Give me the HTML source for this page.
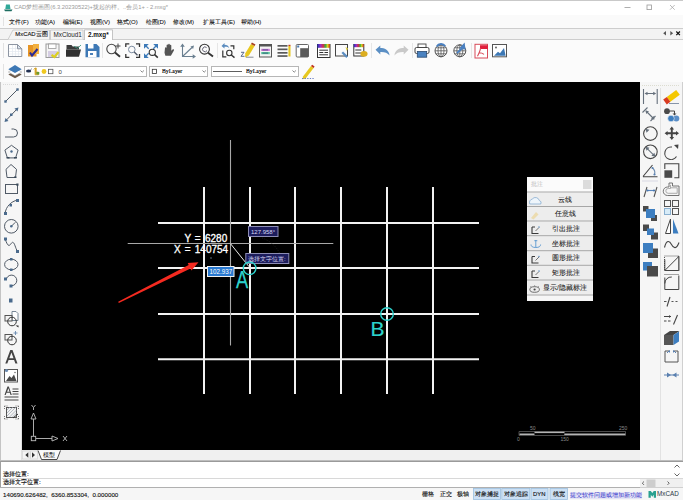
<!DOCTYPE html>
<html><head><meta charset="utf-8">
<style>
*{box-sizing:border-box;margin:0;padding:0}
html,body{width:683px;height:500px;overflow:hidden;background:#f7f7f7;font-family:"Liberation Sans",sans-serif;color:#222;position:relative}
.a{position:absolute}
.t{position:absolute;white-space:nowrap;line-height:1;z-index:2}
svg.ov{z-index:1;position:absolute;left:0;top:0;width:683px;height:500px}
#title{left:0;top:0;width:683px;height:15px;background:#fff;border-top:1px solid #c9c9c9}
#menu{left:0;top:15px;width:683px;height:13px;background:#fafafa}
#tabs{left:0;top:28px;width:683px;height:12px;background:#f3f3f3;border-top:1px solid #cdcdcd;border-bottom:1px solid #cdcdcd}
#tb{left:0;top:40px;width:683px;height:42px;background:#fbfbfb}
#canvas{left:22px;top:82px;width:618px;height:368px;background:#000}
#ltb{left:0;top:82px;width:22px;height:379px;background:#f6f6f6;border-left:1px solid #c4c4c4}
#rtb{left:640px;top:82px;width:43px;height:379px;background:#f6f6f6}
#mtab{left:22px;top:450px;width:618px;height:11px;background:#f0f0f0}
#cmd{left:0;top:460.5px;width:683px;height:27.5px;background:#fff;border-top:1.5px solid #9a9a9a;border-left:1.5px solid #a0a0a0}
#status{left:0;top:488px;width:683px;height:12px;background:#f6f6f6}
.m{font-size:6px;color:#000;-webkit-text-stroke:.06px #000}
.dd{position:absolute;background:#fff;border:1px solid #b6b6b6}
</style></head><body>
<div id="title" class="a"></div>
<div class="t" style="left:14px;top:4.5px;font-size:5.8px;color:#9a9a9a">CAD梦想画图(6.3.20230522)+拢起的样。..会员1+ - 2.mxg*</div>
<div id="menu" class="a"></div>
<div class="t m" style="left:9px;top:19px">文件(F)</div>
<div class="t m" style="left:35px;top:19px">功能(A)</div>
<div class="t m" style="left:62.5px;top:19px">编辑(E)</div>
<div class="t m" style="left:90px;top:19px">视图(V)</div>
<div class="t m" style="left:117px;top:19px">格式(O)</div>
<div class="t m" style="left:145.5px;top:19px">绘图(D)</div>
<div class="t m" style="left:173px;top:19px">修改(M)</div>
<div class="t m" style="left:203px;top:19px">扩展工具(E)</div>
<div class="t m" style="left:241px;top:19px">帮助(H)</div>
<div id="tabs" class="a"></div>
<div id="tb" class="a"></div>
<div id="ltb" class="a"></div>
<div id="rtb" class="a"></div>
<div id="canvas" class="a"></div>
<div id="mtab" class="a"></div>
<div id="cmd" class="a"></div>
<div id="status" class="a"></div>
<!--DROPDOWNS-->
<div class="dd" style="left:24px;top:66px;width:123px;height:11px"></div>
<div class="dd" style="left:149px;top:66px;width:59px;height:11px"></div>
<div class="dd" style="left:211px;top:66px;width:88px;height:11px"></div>
<div class="t" style="left:15.3px;top:32.3px;font-size:5.9px;color:#111;-webkit-text-stroke:.12px #111">MxCAD云图</div>
<div class="t" style="left:53.5px;top:32.3px;font-size:6.3px;color:#222">MxCloud1</div>
<div class="t" style="left:88px;top:32.3px;font-size:6.3px;color:#111;font-weight:bold">2.mxg*</div>
<div class="t" style="left:58.5px;top:68.5px;font-size:6px;color:#444">0</div>
<div class="t" style="left:162px;top:68.5px;font-size:5.8px;color:#000;-webkit-text-stroke:.12px #000;font-family:'Liberation Serif',serif">ByLayer</div>
<div class="t" style="left:246px;top:68.5px;font-size:5.8px;color:#000;-webkit-text-stroke:.12px #000;font-family:'Liberation Serif',serif">ByLayer</div>
<div class="t" style="left:184.5px;top:233.5px;font-size:10px;color:#fff;-webkit-text-stroke:.3px #fff">Y</div>
<div class="t" style="left:194.8px;top:233.5px;font-size:10px;color:#fff;-webkit-text-stroke:.3px #fff">=</div>
<div class="t" style="left:205px;top:233.5px;font-size:10px;color:#fff;-webkit-text-stroke:.3px #fff">6280</div>
<div class="t" style="left:174px;top:244.5px;font-size:10px;color:#fff;-webkit-text-stroke:.3px #fff">X</div>
<div class="t" style="left:184.8px;top:244.5px;font-size:10px;color:#fff;-webkit-text-stroke:.3px #fff">=</div>
<div class="t" style="left:194.8px;top:244.5px;font-size:10px;color:#fff;-webkit-text-stroke:.3px #fff">140754</div>
<div class="t" style="left:235.8px;top:269px;font-size:23px;color:#2cd2cc;-webkit-text-stroke:.25px #2cd2cc;transform:scaleX(.8);transform-origin:0 0">A</div>
<div class="t" style="left:370.5px;top:318px;font-size:21px;color:#2cd2cc;-webkit-text-stroke:.2px #2cd2cc;transform-origin:0 0">B</div>
<div class="t" style="left:251px;top:228.5px;font-size:6px;color:#d8d8f4">127.958°</div>
<div class="t" style="left:248px;top:255.5px;font-size:6px;color:#d8d8f4">选择文字位置:</div>
<div class="t" style="left:209.5px;top:268.5px;font-size:6.3px;color:#fff">102.937</div>
<div class="t" style="left:530px;top:426px;font-size:5px;color:#8a8a8a">50</div>
<div class="t" style="left:619px;top:426px;font-size:5px;color:#8a8a8a">250</div>
<div class="t" style="left:517px;top:437px;font-size:5px;color:#8a8a8a">0</div>
<div class="t" style="left:560.5px;top:437px;font-size:5px;color:#8a8a8a">150</div>
<div class="t" style="left:31px;top:404px;font-size:5.5px;color:#c8c8c8;display:none">Y</div>
<div class="t" style="left:43px;top:452px;font-size:6px;color:#000">模型</div>
<div class="t" style="left:531px;top:182px;font-size:5.8px;color:#b8b8b8">批注</div>
<div class="t" style="left:557.5px;top:196.5px;font-size:6.5px;color:#111;-webkit-text-stroke:.05px #111">云线</div>
<div class="t" style="left:554.5px;top:211px;font-size:6.5px;color:#111;-webkit-text-stroke:.05px #111">任意线</div>
<div class="t" style="left:551.5px;top:225.5px;font-size:6.5px;color:#111;-webkit-text-stroke:.05px #111">引出批注</div>
<div class="t" style="left:551.5px;top:240.5px;font-size:6.5px;color:#111;-webkit-text-stroke:.05px #111">坐标批注</div>
<div class="t" style="left:551.5px;top:255px;font-size:6.5px;color:#111;-webkit-text-stroke:.05px #111">圆形批注</div>
<div class="t" style="left:551.5px;top:269.5px;font-size:6.5px;color:#111;-webkit-text-stroke:.05px #111">矩形批注</div>
<div class="t" style="left:543px;top:284.5px;font-size:6.5px;color:#111;-webkit-text-stroke:.05px #111">显示/隐藏标注</div>
<div class="t" style="left:3px;top:470.8px;font-size:6.25px;color:#111;-webkit-text-stroke:.15px #111">选择位置:</div>
<div class="t" style="left:3px;top:479.2px;font-size:6.25px;color:#111;-webkit-text-stroke:.15px #111">选择文字位置:</div>
<div class="t" style="left:3px;top:491.5px;font-size:6.2px;color:#111;-webkit-text-stroke:.12px #111">140690.626482,&nbsp; 6360.853304,&nbsp; 0.000000</div>
<div class="t" style="left:422px;top:491.5px;font-size:5.9px;color:#111;-webkit-text-stroke:.12px #111">栅格</div>
<div class="t" style="left:439.5px;top:491.5px;font-size:5.9px;color:#111;-webkit-text-stroke:.12px #111">正交</div>
<div class="t" style="left:457px;top:491.5px;font-size:5.9px;color:#111;-webkit-text-stroke:.12px #111">极轴</div>
<div class="t" style="left:475px;top:491.5px;font-size:5.9px;color:#111;-webkit-text-stroke:.12px #111">对象捕捉</div>
<div class="t" style="left:503.5px;top:491.5px;font-size:5.9px;color:#111;-webkit-text-stroke:.12px #111">对象追踪</div>
<div class="t" style="left:533px;top:491.5px;font-size:5.9px;color:#111;-webkit-text-stroke:.12px #111">DYN</div>
<div class="t" style="left:552.5px;top:491.5px;font-size:5.9px;color:#111;-webkit-text-stroke:.12px #111">线宽</div>
<div class="t" style="left:569.5px;top:491.5px;font-size:5.75px;color:#3030c8;background:#e4e4f6;padding:1px 0">提交软件问题或增加新功能</div>
<div class="t" style="left:657px;top:491px;font-size:6.3px;color:#2a3844">MxCAD</div>
<!--SVG-->
<svg class="ov" viewBox="0 0 683 500">
<defs>
<linearGradient id="rb" x1="0" x2="1" y1="0" y2="0">
<stop offset="0" stop-color="#2030c0"/><stop offset=".25" stop-color="#a030c0"/><stop offset=".45" stop-color="#d03040"/><stop offset=".65" stop-color="#40b040"/><stop offset=".8" stop-color="#e0d020"/><stop offset="1" stop-color="#c03020"/>
</linearGradient>
</defs>
<!--grips-->
<path d="M3.5 17v9M3.5 43v15M3.5 64v15" stroke="#e2e2e2" stroke-width="1"/>
<!--1 new doc-->
<path d="M8.5 44.5h9l4.3 4.3v7.7h-13.3z" fill="#fff" stroke="#8d95a2"/>
<path d="M9 48.5h8M9 51.5h12.3M9 54h12.3M12.5 45v11M15.5 45v11M18.5 49v7" stroke="#e2e8ef" stroke-width=".7"/>
<path d="M17.5 44.5v4.3h4.3z" fill="#dde5ef" stroke="#8d95a2"/>
<!--2 orange-->
<rect x="28" y="45" width="8.5" height="11.5" fill="#e69526"/>
<rect x="33" y="44" width="6" height="10" fill="#f2b040"/>
<path d="M30 52.5l2 3 5.5-6.5" stroke="#2b2b95" stroke-width="2" fill="none"/>
<!--3 grey floppy-->
<rect x="46" y="44" width="13" height="13.5" fill="#f5f5f5" stroke="#9a9a9a"/>
<rect x="48.5" y="44" width="7.5" height="4.5" fill="#fff" stroke="#9a9a9a" stroke-width=".8"/>
<rect x="48" y="51" width="9" height="6" fill="#d5cde3"/>
<path d="M51.5 55l3 2 4-5" stroke="#ddd020" stroke-width="2.2" fill="none"/>
<!--4 dark folder-->
<path d="M66.5 45h5l1.2 1.5h6.3v3h-12.5z" fill="#3a3a3a"/>
<path d="M66 49.5h15l-2 7.2h-13z" fill="#303030"/>
<path d="M74 46.3l3.5 2 3.5-3.3" stroke="#3a9a80" stroke-width=".9" fill="none"/>
<!--5 blue floppy-->
<path d="M85.5 44h11l3 3v10.2h-14z" fill="#3d78b5"/>
<rect x="88" y="44" width="5.5" height="4.5" fill="#fff"/>
<rect x="88" y="51" width="8.5" height="6.2" fill="#fff"/>
<rect x="90" y="53" width="3" height="2" fill="#4a80b8"/>
<path d="M102.5 43v15" stroke="#e6e6e6"/>
<!--6 zoom+-->
<circle cx="111.5" cy="49" r="4.7" fill="none" stroke="#454545" stroke-width="1.1"/>
<path d="M115 52.5l5 4.3" stroke="#333" stroke-width="1.9"/>
<path d="M118 43.5v5M115.5 46h5" stroke="#444" stroke-width="1"/>
<!--7 zoom window-->
<path d="M125.8 47v-3.2h3.5M136 43.8h3.5v3.2M139.5 54v3.3h-3.5M129.3 57.3h-3.5v-3.3" stroke="#333" stroke-width="1.3" fill="none"/>
<circle cx="131.8" cy="49.5" r="3.3" fill="none" stroke="#7b8ba0" stroke-width="1"/>
<path d="M134.2 52l3.3 3.3" stroke="#505868" stroke-width="1.3"/>
<!--8 zoom extents-->
<g stroke="#3d7ab8" stroke-width="1.3" fill="none"><path d="M145.5 45.5l3.2 3.2M156.5 45.5l-3.2 3.2M145.5 56.5l3.2-3.2"/></g>
<g fill="#3d7ab8"><path d="M144 44h4.8l-4.8 4.8zM158 44h-4.8l4.8 4.8zM144 58v-4.8l4.8 4.8z"/></g>
<circle cx="152.3" cy="52.3" r="3.1" fill="none" stroke="#333" stroke-width="1.1"/>
<path d="M154.6 54.6l3.2 3" stroke="#333" stroke-width="1.5"/>
<!--9 hand-->
<path d="M165 48c0-1 1.6-1 1.6 0v-2.8c0-1 1.6-1 1.6 0v-.7c0-1 1.6-1 1.6 0v1c0-1 1.5-1 1.5 0v5.3l1.3-1.3c.8-.8 1.9 0 1.3.9l-3 5.3h-5.5l-.9-3z" fill="#555"/>
<!--10 ucs-->
<g stroke="#6a7f90" stroke-width="1.1" fill="none"><path d="M182.5 46v10.5h11M182.5 56.5l9.5-9"/></g>
<g fill="#6a7f90"><path d="M182.5 43.5l-2.3 3.3h4.6zM196 56.5l-3.3-2.3v4.6zM194 45.5l-3.6.9 2.7 2.7z"/></g>
<!--11 zoom realtime-->
<circle cx="204.5" cy="49.2" r="4.9" fill="none" stroke="#333" stroke-width="1.1"/>
<path d="M208 52.8l5 3.8" stroke="#333" stroke-width="1.9"/>
<path d="M206.6 47.6a2.4 2.4 0 1 0 .4 3" fill="none" stroke="#556" stroke-width=".9"/>
<path d="M217.5 43v15" stroke="#e6e6e6"/>
<!--12 zoom prev-->
<path d="M221.5 46l3-3v1.7c2.2 0 4.3.9 4.8 3.6c-1.1-1.4-2.7-1.7-4.8-1.6v1.7z" fill="#5b8cbf"/>
<path d="M230.5 45.8h3.3v3.5M222.8 50.5v6.3h3.5" stroke="#333" stroke-width="1.2" fill="none"/>
<circle cx="229.3" cy="53" r="2.7" fill="none" stroke="#333" stroke-width="1.1"/>
<path d="M231.3 55l3.2 2.6" stroke="#333" stroke-width="1.4"/>
<!--13 pencil z-->
<path d="M245.3 53.3L251 44l3.6 2.1-5.7 9.4-3.9 2z" fill="#e8c820"/>
<path d="M251 44l.9-1.5 3.6 2.1-.9 1.5z" fill="#a84020"/>
<path d="M241 52.3h3l-3 4h3.5" stroke="#4a5a80" stroke-width=".9" fill="none"/>
<path d="M246 57.2h7.5" stroke="#66707a" stroke-width=".8"/>
<!--14 layer box-->
<rect x="259.5" y="44.5" width="12" height="12.5" fill="#f3f3f3" stroke="#555" stroke-width="1"/>
<rect x="259.5" y="44.5" width="12" height="2" fill="#555"/>
<rect x="261.2" y="48.8" width="8.6" height="2.2" fill="#cc7ad8"/>
<rect x="261.2" y="52" width="8.6" height="2.2" fill="#5cc8a0"/>
<path d="M262.5 49.9h5.5M262.5 53.1h5.5" stroke="#263a6a" stroke-width=".7"/>
<!--15 lines pencil-->
<g fill="#5a5a5a"><rect x="277.5" y="45" width="10" height="1.7"/><rect x="277.5" y="48.5" width="10" height="1.7"/><rect x="277.5" y="52" width="10" height="1.7"/><rect x="277.5" y="55.2" width="10" height="1.7"/></g>
<rect x="288.4" y="46" width="2.1" height="10.5" fill="#e6c820"/>
<rect x="288.4" y="44.8" width="2.1" height="1.3" fill="#c04020"/>
<!--16 grey block-->
<rect x="296.2" y="44.5" width="12.3" height="12.5" rx="1" fill="#fff" stroke="#666" stroke-width="1"/>
<path d="M300.2 48.2h8.3v8.8h-8.3z" fill="#5a5a5a"/>
<rect x="297.2" y="45.5" width="2" height="2" fill="#4a7ab0"/>
<!--17 colour text style-->
<rect x="317.5" y="44.5" width="12.5" height="13" fill="#fff" stroke="#333" stroke-width="1"/>
<rect x="317.5" y="44" width="12.5" height="3.8" fill="url(#rb)"/>
<path d="M319.3 50.2h8.7M319.3 52.5h4M324.5 52.5h3.5M319.3 54.8h8.7" stroke="#333" stroke-width="1"/>
<!--18 window arrow-->
<rect x="335.5" y="44.5" width="12" height="11.5" fill="none" stroke="#444" stroke-width="1"/>
<path d="M342.3 52.3l4.8 4.8" stroke="#5a8cc0" stroke-width="2.2"/>
<path d="M345.5 47l2.5 1.5-1.2 2.5z" fill="#e0d040"/>
<!--19 colour box hand-->
<rect x="353.8" y="44.5" width="10" height="11.5" fill="#fff" stroke="#333" stroke-width="1"/>
<rect x="353.8" y="44" width="10" height="3.2" fill="url(#rb)"/>
<path d="M355.3 50h6M355.3 53h6" stroke="#333" stroke-width="1"/>
<ellipse cx="364" cy="53.8" rx="3.6" ry="2.9" fill="#dcae20"/>
<path d="M371.5 43v15" stroke="#e6e6e6"/>
<!--20 undo-->
<path d="M375.5 49.8l4.8-4.3v2.6c4.2 0 8.3 1.6 9.3 7.3c-2.1-2.6-5.2-3.6-9.3-3.4v2.6z" fill="#5b8fc4"/>
<!--21 redo-->
<path d="M408.5 49.8l-4.8-4.3v2.6c-4.2 0-8.3 1.6-9.3 7.3c2.1-2.6 5.2-3.6 9.3-3.4v2.6z" fill="#c9c9c9"/>
<path d="M412.5 43v15" stroke="#e6e6e6"/>
<!--22 printer-->
<rect x="418" y="44" width="8" height="3.8" fill="#fff" stroke="#444" stroke-width=".9"/>
<rect x="415" y="47.5" width="14" height="6" rx="1.5" fill="#fff" stroke="#444" stroke-width="1"/>
<rect x="417.3" y="51.5" width="9.4" height="5.7" fill="#4a82c0" stroke="#2a4a70" stroke-width=".8"/>
<!--23 globe-->
<circle cx="441" cy="50.8" r="6" fill="#fff" stroke="#555" stroke-width="1"/>
<path d="M435 50.8h12M435.8 47.8h10.4M435.8 53.8h10.4M441 44.8v12" stroke="#555" stroke-width=".8"/>
<ellipse cx="441" cy="50.8" rx="3" ry="6" fill="none" stroke="#555" stroke-width=".8"/>
<path d="M436.8 46.5a5 5 0 0 1 8.4-.3" stroke="#4a80c0" stroke-width="2" fill="none"/>
<!--24 globe2-->
<circle cx="459.8" cy="50.8" r="6" fill="#fff" stroke="#555" stroke-width="1"/>
<path d="M453.8 50.8h12M454.6 47.8h10.4M454.6 53.8h10.4M459.8 44.8v12" stroke="#555" stroke-width=".8"/>
<ellipse cx="459.8" cy="50.8" rx="3" ry="6" fill="none" stroke="#555" stroke-width=".8"/>
<path d="M457 53l6-5.5M464 44.5l.5 4-3.5-.8z" stroke="#4a80c0" stroke-width="1.8" fill="#4a80c0"/>
<path d="M471.5 43v15" stroke="#e6e6e6"/>
<!--25 pdf-->
<rect x="475" y="44.3" width="12.5" height="13.7" fill="#fff" stroke="#d84a58" stroke-width="1"/>
<rect x="480" y="45.2" width="8" height="3.8" fill="#e0203c"/>
<path d="M477.5 56.2c1.5-3 3-6 3-8.2M478.8 52.8c2 0 4 .5 5.2 1.6" stroke="#d84a58" stroke-width="1.1" fill="none"/>
<!--26 image-->
<rect x="492.5" y="44.5" width="14" height="12.3" fill="#fff" stroke="#555" stroke-width="1"/>
<path d="M494 55.8l4-4 2 1.5 4-5.2 1.6 7.7z" fill="#3d78b5"/>
<circle cx="496" cy="47.5" r=".9" fill="#555"/>
<!--tabs-->
<path d="M8 39.5l5-9.5h36.5v9.5" fill="#f4f4f4" stroke="#c4c4c4" stroke-width=".8"/>
<path d="M50.5 39.5v-9.5h32.5v9.5" fill="#f4f4f4" stroke="#c4c4c4" stroke-width=".8"/>
<path d="M84.5 40v-10.2h28v10.2" fill="#fff" stroke="#b8b8b8" stroke-width=".8"/>
<path d="M666 31v4.6l-2.8-2.3z" fill="#555"/><path d="M670.3 31v4.6l2.8-2.3z" fill="#555"/>
<path d="M676.3 31.5l3.6 3.6M679.9 31.5l-3.6 3.6" stroke="#111" stroke-width="1.2"/>
<path d="M624.5 7.5h6" stroke="#999" stroke-width=".8"/><rect x="647" y="5" width="4.6" height="4.6" fill="none" stroke="#999" stroke-width=".8"/><path d="M670 5l4.7 4.7M674.7 5l-4.7 4.7" stroke="#aaa" stroke-width=".8"/>
<path d="M6 4.5h3.8l.7 4.5h-5.2z" fill="#30a898"/><path d="M4 9.5h8.5l-1 1.7h-6.5z" fill="#1e6e62"/>
<!--toolbar2-->
<path d="M8.3 74.5l6.7 3.8 6.7-3.8-6.7-3.8z" fill="#6b5a4a"/>
<path d="M8.3 72l6.7 3.8 6.7-3.8-6.7-3.8z" fill="#fff" stroke="#999" stroke-width=".5"/>
<path d="M8.3 69.3l6.7 3.8 6.7-3.8-6.7-4.3z" fill="#3d78b5"/>
<ellipse cx="28.6" cy="71" rx="2.6" ry="1.6" fill="#223052"/><path d="M30.5 69.8l1.2-1" stroke="#223052" stroke-width=".8"/>
<path d="M33.5 69.5l1.5-1.5M35 68h1.3v4h2.2v2.8h-3.5z" stroke="#d8a020" stroke-width=".7" fill="#c8a830"/>
<rect x="36.5" y="72" width="2.8" height="2.5" fill="#6a9a30"/>
<circle cx="44" cy="71.5" r="2.4" fill="#f0c820"/>
<rect x="48.5" y="69.3" width="4.4" height="4.4" fill="#fff" stroke="#555" stroke-width=".8"/>
<path d="M140.5 70.5l1.7 1.7 1.7-1.7M202.5 70.5l1.7 1.7 1.7-1.7M292.5 70.5l1.7 1.7 1.7-1.7" stroke="#555" stroke-width=".7" fill="none"/>
<rect x="152.3" y="69.3" width="4.2" height="4.2" fill="#fff" stroke="#333" stroke-width=".8"/>
<path d="M213 71.5h29" stroke="#333" stroke-width=".8"/>
<path d="M303 76.5l8-10.5 2.6 2-8 10.5-3 .8z" fill="#e6c820"/>
<path d="M311 66l1.2-1.3 2.4 1.8-1 1.5z" fill="#c03020"/>
<path d="M302 78.5h12" stroke="#5a70c0" stroke-width=".9" stroke-dasharray="1.3 1.3"/>
<!--left toolbar-->
<path d="M3 84.5h16" stroke="#dadada" stroke-width="1" stroke-dasharray="1 1"/>
<path d="M21.5 82v379" stroke="#e0e0e0"/>
<g stroke="#505a66" stroke-width="1" fill="none">
<path d="M5.5 101.5l12-12"/>
<path d="M5.5 121l12-12.5"/>
<path d="M5 137h8.5a4 4 0 0 0 0-8h-2"/>
<path d="M11.5 145.3l6.6 4.8-2.5 7.8h-8.2l-2.5-7.8z"/>
<path d="M11 164.5l5.5 4.8-1 8.2h-8.5l-1-8.2z"/>
<rect x="5.5" y="184.5" width="12" height="9"/>
<path d="M5 213.5c1-7 6-12 12.5-13.5"/>
<circle cx="11.3" cy="226.3" r="6.8"/>
<path d="M11.3 226.3l4-4"/>
<path d="M5 239c1.5 3 2 6 4 6.5c2-.5 2.5-4 4.2-3c1.6 1 2 5 4.3 9"/>
<ellipse cx="11.3" cy="264.5" rx="6.7" ry="5.3"/>
<path d="M6.2 280a5.3 5.3 0 1 1 5 5.7"/>
</g>
<g fill="#4a6a8c">
<rect x="16.3" y="88.3" width="2.4" height="2.4"/><rect x="4.3" y="100.3" width="2.4" height="2.4"/>
<path d="M18.5 107.5l-4 1 3 3zM4.5 122l4-1-3-3z"/><rect x="10" y="113.5" width="2.5" height="2.5"/>
<circle cx="11.5" cy="151.5" r="1.2"/>
<rect x="4" y="212" width="3" height="3"/><rect x="9.5" y="204" width="2.5" height="2.5"/><rect x="16" y="199" width="3" height="3"/>
<circle cx="11.3" cy="226.3" r="1.2"/>
<rect x="4" y="237.5" width="3" height="3"/><rect x="16" y="250" width="3" height="3"/>
<rect x="10" y="258" width="2.5" height="2.5"/><rect x="10" y="268.5" width="2.5" height="2.5"/>
<rect x="4" y="277.5" width="3" height="3"/><rect x="9.5" y="284.5" width="3" height="3"/>
<rect x="9" y="298.5" width="3.5" height="4"/>
</g>
<g fill="#3a4a5a"><rect x="6.5" y="157" width="3" height="1.5"/><rect x="14" y="157" width="3" height="1.5"/><rect x="14" y="176.5" width="2.5" height="1.5"/><rect x="16.3" y="183.5" width="2.2" height="2.2"/></g>
<!--insert block-->
<path d="M12 311.5h4l2 2v7h-6z" fill="#fff" stroke="#6a7a8a" stroke-width=".9"/>
<rect x="5" y="315.5" width="7" height="5.5" fill="#f4f4f4" stroke="#555" stroke-width="1"/>
<circle cx="12" cy="321.5" r="4.3" fill="none" stroke="#333" stroke-width="1"/>
<path d="M15.5 325.5h3v2z" fill="#222"/>
<!--make block-->
<rect x="5" y="334.5" width="7" height="5.5" fill="#f4f4f4" stroke="#555" stroke-width="1"/>
<circle cx="12" cy="340.5" r="4.3" fill="none" stroke="#333" stroke-width="1"/>
<path d="M15.5 331v4M13.5 333h4" stroke="#6a8ab0" stroke-width=".9"/>
<!--A-->
<path d="M5.3 363.5l5-13.5h2.2l5 13.5h-2.1l-1.3-3.6h-5.5l-1.3 3.6zM9.3 358.2h4.2l-2.1-5.8z" fill="#444"/>
<!--image-->
<rect x="4.5" y="369.5" width="13" height="12.5" fill="#fff" stroke="#555" stroke-width="1"/>
<path d="M6 381l3.5-5 2 2 2.5-3.5 2.5 6.5z" fill="#4a4a4a"/>
<circle cx="6.5" cy="370.5" r="1.6" fill="#6a8ab0"/><circle cx="15" cy="372.5" r=".7" fill="#555"/>
<!--mtext-->
<path d="M4.5 395l3-8.5h1.3l3 8.5h-1.2l-.8-2.2h-3.3l-.8 2.2zM7.1 391.8h2.5l-1.25-3.6z" fill="#444"/>
<path d="M12.5 389h6M12.5 391.5h6M12.5 394h6M4.5 397h14M4.5 400h14" stroke="#444" stroke-width="1"/>
<!--hatch-->
<rect x="6.5" y="407.5" width="10" height="10" fill="#f2f2f2" stroke="#555" stroke-width="1"/>
<path d="M7 410l3-3M7 413l6-6M7 416l9-9M9.5 417l7-7M12.5 417l4-4" stroke="#9aa4b0" stroke-width=".7"/>
<path d="M4.5 406h4M4.5 406v4M18.5 406h-4M18.5 406v4M4.5 419h4M4.5 419v-4M18.5 419h-4M18.5 419v-4" stroke="#555" stroke-width=".8" stroke-dasharray="1 1"/>
<path d="M13 418l5-4" stroke="#333" stroke-width="1"/>
<!--right toolbar-->
<path d="M642 85.5h38" stroke="#dcdcd0" stroke-dasharray="1 1"/>
<path d="M660.5 88v373" stroke="#e2e2e2"/>
<path d="M682.5 82v379" stroke="#d0d0d0"/>
<g stroke="#66707c" stroke-width="1.1" fill="none">
<path d="M643.5 89v15M657.2 89v15M646 93.5h9"/>
<path d="M642.5 112.5l5-5M650.5 121l5-5M646 111l8 8"/>
<circle cx="650.4" cy="133.6" r="6.8" stroke="#444"/>
<circle cx="650.4" cy="151.8" r="6.8" stroke="#444"/>
<path d="M646.5 147.8l8 8"/>
<path d="M643 176.5l9.5-11.5M643 176.8h14.5" stroke="#444"/>
<path d="M652.5 168a6 6 0 0 1 2 6.5" stroke="#6a8ab0"/>
<path d="M644 197l3-10M654 197l3-10" stroke="#555"/><path d="M647 190.5h7.5" stroke="#5a88c0"/>
<path d="M672 147a6.3 6.3 0 1 0 4.5 9.5" stroke="#444"/>
</g>
<g fill="#66707c">
<path d="M644.5 93.5l3-1.8v3.6zM656.2 93.5l-3-1.8v3.6z"/>
<path d="M645.5 110.5l3.5.7-2.8 2.8zM654.5 119.5l-3.5-.7 2.8-2.8z"/>
<path d="M645.5 128.7l4 1-3 3z"/>
<path d="M645.5 146.8l4 1-3 3zM655.4 156.8l-4-1 3-3z"/>
<circle cx="652.5" cy="168" r="1.1" fill="#5a80b0"/><circle cx="654.5" cy="174.5" r="1.1" fill="#5a80b0"/>
<circle cx="647.5" cy="190.5" r="1.1" fill="#4a78b0"/><circle cx="654" cy="190.5" r="1.1" fill="#4a78b0"/>
</g>
<path d="M642 181h16" stroke="#c8c8d8" stroke-width=".6"/>
<!--draw order-->
<rect x="643" y="206" width="5.5" height="5.5" fill="#4a4a4a"/><rect x="651" y="215" width="6" height="6" fill="#4a4a4a"/><rect x="646" y="209" width="9" height="9" fill="#3d7ec0"/>
<rect x="643" y="224.5" width="6" height="6.5" fill="#4a4a4a"/><rect x="651" y="232.5" width="7" height="7" fill="#4a4a4a"/><rect x="647" y="228.5" width="7" height="6.5" fill="#3d7ec0"/>
<rect x="648" y="248.5" width="10" height="9.5" fill="#4a4a4a"/><rect x="643" y="243" width="10" height="10" fill="#3d7ec0"/>
<rect x="643" y="262" width="9" height="8.5" fill="#3d7ec0"/><rect x="647" y="266" width="11" height="10.5" fill="#4a4a4a"/>
<!--eraser copy move-->
<path d="M666.8 96.9l9.4-7 3.6 4.8-9.4 7z" fill="#f4c800"/>
<path d="M663.2 99.6l3.6-2.7 3.6 4.8-3.6 2.7z" fill="#d83a20"/>
<path d="M669 103.5h10" stroke="#7a8aa0" stroke-width=".9"/>
<circle cx="667" cy="111.2" r="2.9" fill="#4a4a4a"/>
<path d="M669.5 111h5v3" stroke="#444" stroke-width="1" fill="none"/><path d="M672.5 113.5h4l-2 2z" fill="#444"/>
<circle cx="676.3" cy="118.5" r="3" fill="#5a8ec8"/><circle cx="671" cy="118.5" r="3.3" fill="#3d7ec0" stroke="#f6f6f6" stroke-width=".6"/>
<path d="M671.8 126.5l2.3 3h-4.6zM671.8 140l2.3-3h-4.6zM664.6 133.3l3-2.3v4.6zM679 133.3l-3-2.3v4.6z" fill="#444"/>
<path d="M671.8 128.5v9.5M666.5 133.3h10.5" stroke="#444" stroke-width="1.9"/>
<path d="M674 145l4.5-.5-.5 4.5z" fill="#444"/>
<!--scale offset-->
<path d="M664.8 169v-5.3h14v14h-4.5" stroke="#444" stroke-width="1.1" fill="none"/>
<rect x="664.4" y="170.3" width="7.8" height="7.5" fill="#4a4a4a"/>
<path d="M669 183h3.5v3h6.5v9.5h-11.5a4.2 4.2 0 0 1 0-8.5h1.5z" stroke="#666" stroke-width=".9" fill="none"/>
<path d="M670.8 185h-.3v3.5h-2.3a2.3 2.3 0 0 0 0 4.8h9v-5.5h-6.5" stroke="#999" stroke-width=".8" fill="none"/>
<!--array mirror wave chamfer fillet-->
<g fill="none" stroke="#555" stroke-width="1"><rect x="664.5" y="200.5" width="6" height="6"/><rect x="672.5" y="200.5" width="6" height="6"/><rect x="672.5" y="208.5" width="6" height="6"/></g>
<rect x="664.5" y="208.5" width="6" height="6" fill="#d8ecf8" stroke="#8ab0d0"/>
<path d="M670.5 219l-5 14.5h5z" fill="#fff" stroke="#444" stroke-width="1"/>
<path d="M673 219l5.5 14.5h-5.5z" fill="#3d7ec0"/>
<path d="M664.5 247.5c2-8 5-7 7-3s5 5 7.5-2" stroke="#444" stroke-width="1.1" fill="none"/>
<path d="M664.5 256h14.5v14.5h-14.5z" fill="none" stroke="#555" stroke-width="1" stroke-dasharray="1 1"/>
<path d="M664.5 270.5v-14.5" stroke="#fff" stroke-width="0"/>
<path d="M664.8 259.5v11h14v-14h-1M664.8 270.5l13.5-13.5" stroke="#444" stroke-width="1" fill="none"/>
<path d="M664.5 274.5h14.5" stroke="#555" stroke-width="1" stroke-dasharray="1 1"/>
<path d="M664.8 277.5v12h14v-14M664.8 283.5a6.5 6.5 0 0 1 7-6.5" stroke="#444" stroke-width="1" fill="none"/>
<!--break extend cube stretch join-->
<path d="M667 306.5l3-9.5" stroke="#444" stroke-width="1.1"/>
<path d="M664 301.5h2.5M671.5 301.5h2M675.5 301.5h2" stroke="#555" stroke-width="1"/>
<path d="M664 316.5h7M664 321h2.5M668 321h2.5" stroke="#444" stroke-width="1"/><path d="M669 315l2 1.5-2 1.5z" fill="#444"/>
<path d="M673.5 324.5l4-9.5" stroke="#444" stroke-width="1.1"/>
<path d="M664 335h9.5l6-4h-9.5z" fill="#444"/>
<rect x="664" y="335" width="9.5" height="10" fill="#555"/>
<path d="M673.5 335l5.5-3.5v10l-5.5 3.5z" fill="#3d7ec0"/>
<path d="M665 351v11h13v-11M669 351h-4M674 351h4" stroke="#555" stroke-width="1" fill="none"/>
<path d="M667 353l2.5-2.5v2M676 353l-2.5-2.5v2" stroke="#5a80b0" stroke-width="1" fill="none"/>
<path d="M664 375h15" stroke="#5a80b0" stroke-width="1"/><path d="M671 375l-4-2.5v5zM672.5 375l4-2.5v5z" fill="#5a80b0"/>
<!--drawing-->
<g stroke="#f2f2f2" stroke-width="2">
<path d="M204 187v207M250 187v207M295 187v207M341 187v207M387 187v207M433 187v207"/>
<path d="M158 223h321M158 268h321M158 314h321M158 359.2h321"/>
</g>
<path d="M230.5 140v205.5M127.7 243.5h205.6" stroke="#a8a8a8" stroke-width="1.1"/>
<path d="M230.5 243.7l18.5 23" stroke="#e8e8e8" stroke-width="1"/>
<path d="M262 238a30 30 0 0 1 20 22" stroke="#2a2a2a" stroke-width=".8" fill="none" stroke-dasharray="1 1.5"/>
<circle cx="211" cy="258" r=".8" fill="#6a7a8a"/>
<path d="M118.2 301.8L188.7 264.9 187.7 262.9 198.5 262.2 191.5 270.4 190.5 268.5 118.8 302.9z" fill="#f52a20"/>
<circle cx="387" cy="314" r="6.3" fill="none" stroke="#2cd2cc" stroke-width="1.4"/>
<rect x="248.5" y="226.5" width="29.5" height="10" fill="#1c1c5c" stroke="#8c8cb4" stroke-width="1"/>
<rect x="245.8" y="253.5" width="43" height="10" fill="#1c1c5c" stroke="#8c8cb4" stroke-width="1"/>
<rect x="207.5" y="266.5" width="26.5" height="10" fill="#2878d0" stroke="#f0f0f0" stroke-width="1"/>
<circle cx="249.6" cy="268.3" r="6.3" fill="none" stroke="#2cd2cc" stroke-width="1.4"/>
<!--ucs-->
<g stroke="#bdbdbd" stroke-width=".9" fill="none">
<path d="M33.5 419v17M36 438.5h16"/>
<rect x="31.3" y="436.3" width="4.4" height="4.4"/>
<path d="M33.5 413l-2.5 6h5z M58 438.5l-6-2.5v5z"/>
<path d="M31.5 405l2 2.5 2-2.5M33.5 407.5v2.5M63 436l4 5M67 436l-4 5"/>
</g>
<!--scale bar-->
<g stroke="#6a6a6a" fill="none" stroke-width=".7"><path d="M519 431.5h106.5v4h-106.5z"/></g>
<path d="M519.5 434.3h15M564.3 434.3h61" stroke="#b4b4b4" stroke-width="1.5"/>
<path d="M534.5 432.4h30" stroke="#b4b4b4" stroke-width="1.4"/>
<!--model tab bar-->
<rect x="22.5" y="451" width="15" height="8" fill="#f4f4f4" stroke="#d6d6d6" stroke-width=".8"/>
<path d="M25.3 455l3-2.8v5.6zM35 455l-3-2.8v5.6z" fill="#333"/>
<path d="M30.2 451.5v7" stroke="#bbb" stroke-width=".7"/>
<path d="M38 450.5l3.5 9h15.5l3.5-9" fill="#fafafa" stroke="#333" stroke-width=".9"/>
<path d="M0 460.5h683" stroke="#bdbdbd" stroke-width="1"/>
<!--panel-->
<rect x="527" y="177" width="66" height="124" fill="#f6f6f6"/>
<rect x="527" y="177" width="66" height="15" fill="#fbfbfb"/>
<rect x="583" y="180" width="8.5" height="9" fill="#dcdcdc"/>
<g fill="#ededed"><rect x="527.5" y="192.5" width="65" height="14"/><rect x="527.5" y="207" width="65" height="14"/><rect x="527.5" y="221.5" width="65" height="14"/><rect x="527.5" y="236.2" width="65" height="14.3"/><rect x="527.5" y="251" width="65" height="14.3"/><rect x="527.5" y="265.8" width="65" height="14"/><rect x="527.5" y="280.3" width="65" height="14.3"/></g>
<path d="M527 192h66M527 206.5h66M527 221h66M527 235.7h66M527 250.7h66M527 265.3h66M527 280h66M527 295h66" stroke="#a6a6a6" stroke-width="1"/>
<path d="M529.8 204a4 4 0 0 1 2.5-5a4 4 0 0 1 7 1.5a2.5 2.5 0 0 1 1.5 3.5z" fill="#eef5fb" stroke="#7aa4cc" stroke-width=".7"/>
<path d="M531 218l5-6 2.5 2.5-5 5z" fill="#ecdcb0"/>
<path d="M532 227v6.5h6.5M535 227h-3" stroke="#3a3a3a" stroke-width="1.1" fill="none"/><path d="M535.5 231l3.5-3.5" stroke="#555" stroke-width=".8"/><circle cx="539" cy="227" r=".8" fill="#6a98c8"/>
<path d="M531 244.5a4.8 3 0 0 0 9.6 0M535.8 240v7.3M534.3 240.7h3" stroke="#5a98d0" stroke-width=".9" fill="none"/>
<path d="M532 256.5v6.5h6.5M535 256.5h-3" stroke="#3a3a3a" stroke-width="1.1" fill="none"/><path d="M535.5 260.5l3.5-3.5" stroke="#555" stroke-width=".8"/><circle cx="539" cy="256.5" r=".8" fill="#6a98c8"/>
<path d="M532 271v6.5h6.5M535 271h-3" stroke="#3a3a3a" stroke-width="1.1" fill="none"/><path d="M535.5 275l3.5-3.5" stroke="#555" stroke-width=".8"/><circle cx="539" cy="271" r=".8" fill="#6a98c8"/>
<path d="M529.8 289.5a4.8 2.8 0 0 1 9.6 0a4.8 2.8 0 0 1-9.6 0z" fill="none" stroke="#444" stroke-width=".75"/><circle cx="534.6" cy="289.5" r="1.1" fill="#444"/><path d="M530.5 286.3l.8.8M534.6 285.3v1M538.7 286.3l-.8.8" stroke="#444" stroke-width=".6"/>
<!--status bar-->
<rect x="473.5" y="488.5" width="27" height="11" fill="#cce0f4" stroke="#9cc0e0" stroke-width=".8"/>
<rect x="501.8" y="488.5" width="28" height="11" fill="#cce0f4" stroke="#9cc0e0" stroke-width=".8"/>
<rect x="531" y="488.5" width="17" height="11" fill="#cce0f4" stroke="#9cc0e0" stroke-width=".8"/>
<rect x="550" y="488.5" width="17.5" height="11" fill="#cce0f4" stroke="#9cc0e0" stroke-width=".8"/>
<path d="M648.5 491h2.3l1.5 2 1.5-2h2.2v6.8h-2.2v-3l-1.5 2-1.5-2v3h-2.3z" fill="#2aa090"/>
<!--cmd scrollbars-->
<path d="M674.5 467.5l2.5-2.5 2.5 2.5M674.5 473.5l2.5 2.5 2.5-2.5" stroke="#555" stroke-width=".9" fill="none"/>
<path d="M2 478.5h683" stroke="#d8d8d8" stroke-width="1"/>
<path d="M0 487.5h683" stroke="#b0b0b0" stroke-width="1"/>
<rect x="640" y="479" width="43" height="8.5" fill="#f0f0f0"/>
<rect x="646.5" y="479.5" width="9" height="7.5" fill="#cdcdcd"/>
<path d="M644 481.5l-1.7 1.7 1.7 1.7M667.5 481.5l1.7 1.7-1.7 1.7" stroke="#555" stroke-width=".9" fill="none"/>
<!--END-->
</svg>
</body></html>
